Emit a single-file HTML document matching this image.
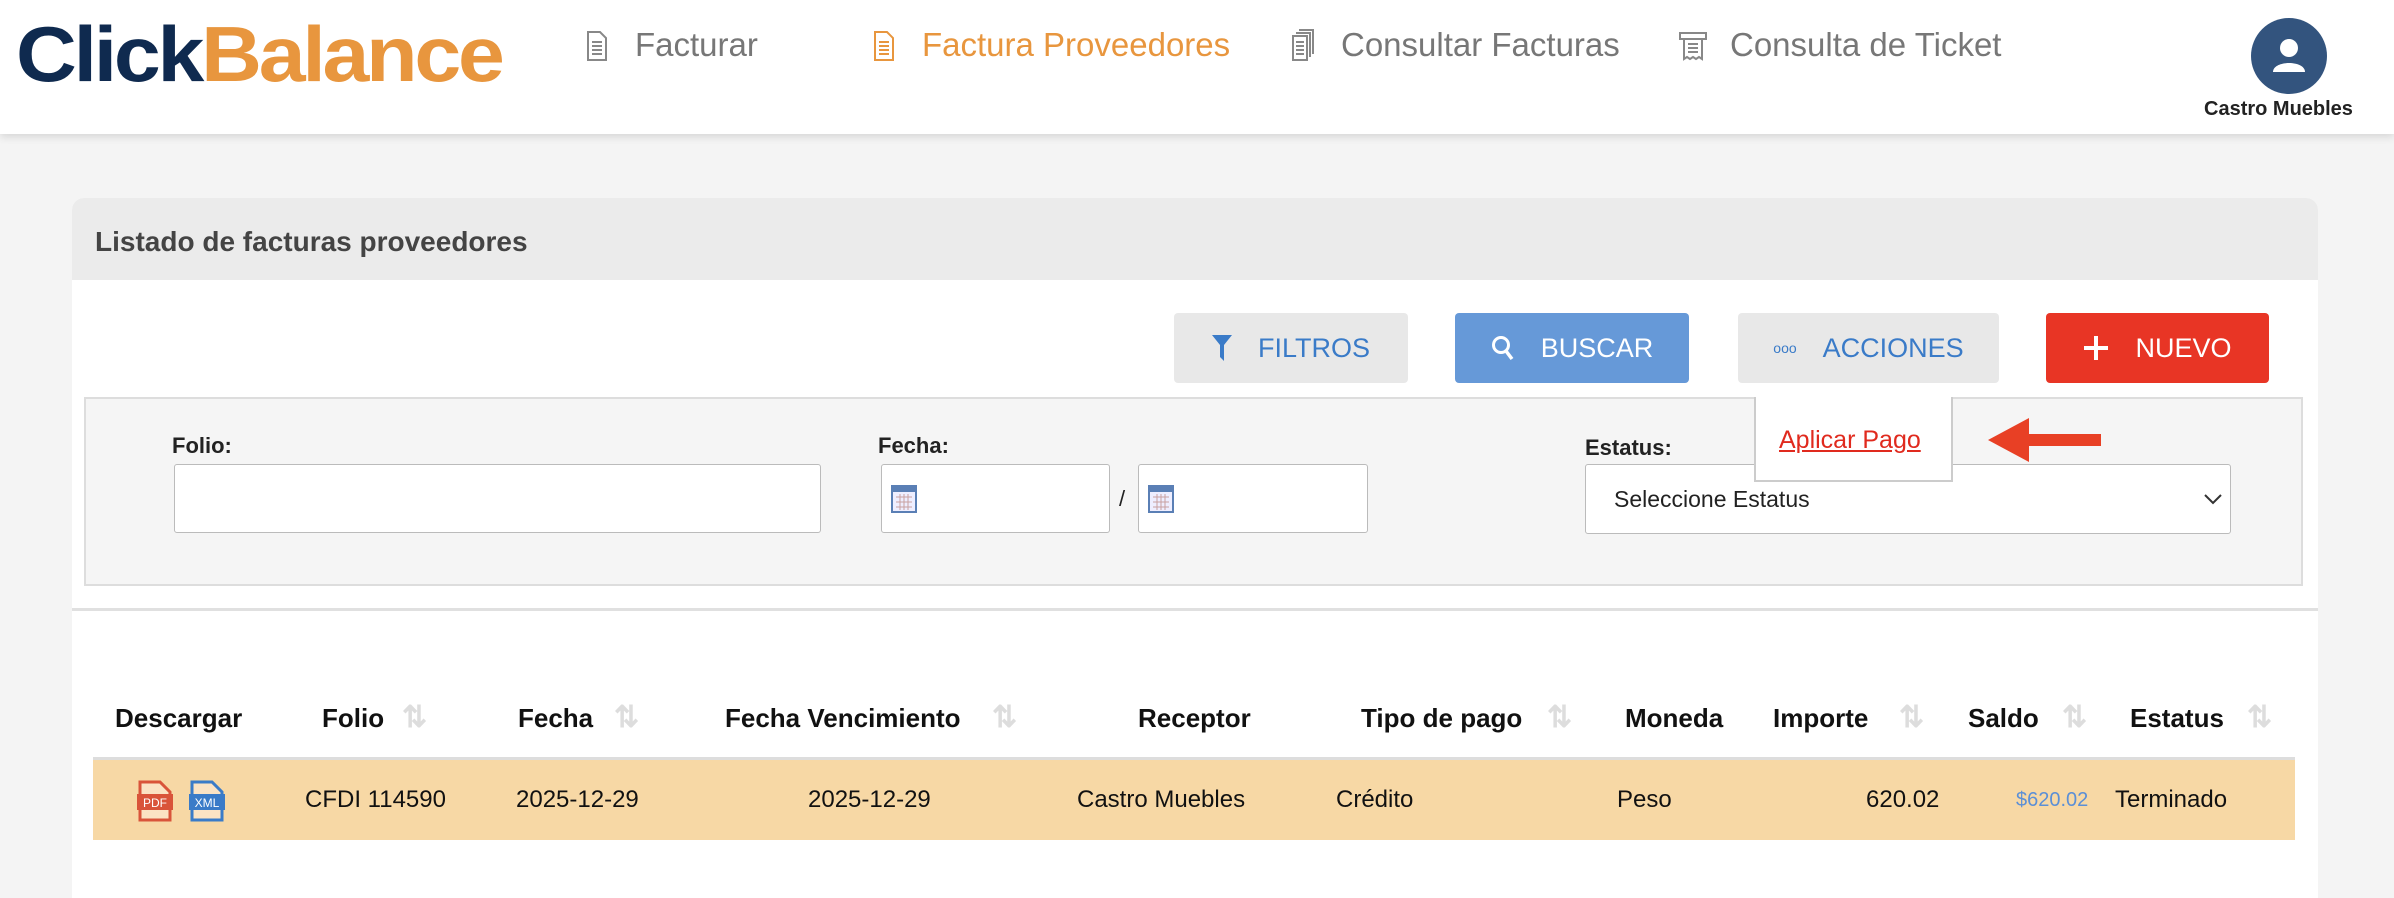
<!DOCTYPE html>
<html><head><meta charset="utf-8"><style>
*{margin:0;padding:0;box-sizing:border-box}
body{width:2394px;height:878px;background:#f4f4f4;font-family:"Liberation Sans",sans-serif;position:relative;overflow:hidden}
.a{position:absolute;white-space:nowrap}
.hdr{position:absolute;left:0;top:0;width:2394px;height:134px;background:#fff;box-shadow:0 3px 8px rgba(0,0,0,.12)}
.nav{font-size:33px;color:#777;top:26px}
.card{position:absolute;left:72px;top:198px;width:2246px;height:700px;background:#fff;border-radius:12px 12px 0 0;overflow:hidden}
.btn{position:absolute;top:313px;height:70px;border-radius:4px;font-size:27px;display:flex;align-items:center;justify-content:center;gap:26px}
.lbl{font-weight:bold;font-size:22px;color:#222}
.inp{position:absolute;height:69px;background:#fff;border:1px solid #bbb;border-radius:3px}
.th{font-weight:bold;font-size:26px;color:#111;top:703px}
.td{font-size:24px;color:#111;top:786px}
.sort{position:absolute;top:700px;font-size:30px;color:#ddd;font-weight:bold}
</style></head><body>
<div class="hdr"></div>
<div class="a" style="left:16px;top:14px;font-size:78px;font-weight:bold;letter-spacing:-3px;line-height:80px;transform:scaleX(1.08);transform-origin:left top"><span style="color:#0f2a4f">Click</span><span style="color:#e8963e">Balance</span></div>

<svg class="a" style="left:586px;top:30px" width="22" height="32" viewBox="0 0 22 32"><path d="M2 2h12l6 6v22H2z" fill="none" stroke="#888" stroke-width="2"/><path d="M6 12h10M6 16h10M6 20h10M6 24h10" stroke="#888" stroke-width="2"/></svg>
<div class="a nav" style="left:635px">Facturar</div>
<svg class="a" style="left:873px;top:30px" width="22" height="32" viewBox="0 0 22 32"><path d="M2 2h12l6 6v22H2z" fill="none" stroke="#e8963e" stroke-width="2"/><path d="M6 12h10M6 16h10M6 20h10M6 24h10" stroke="#e8963e" stroke-width="2"/></svg>
<div class="a nav" style="left:922px;color:#e8963e">Factura Proveedores</div>
<svg class="a" style="left:1291px;top:28px" width="26" height="34" viewBox="0 0 26 34"><path d="M8 2h14v24M5 5h14v24" fill="none" stroke="#888" stroke-width="2"/><path d="M2 8h14v24H2z" fill="none" stroke="#888" stroke-width="2"/><path d="M5 14h8M5 18h8M5 22h8M5 26h8" stroke="#888" stroke-width="2"/></svg>
<div class="a nav" style="left:1341px">Consultar Facturas</div>
<svg class="a" style="left:1678px;top:30px" width="30" height="32" viewBox="0 0 30 32"><path d="M2 3h26v6H2z" fill="none" stroke="#888" stroke-width="2"/><path d="M6 9v20l3-2 3 2 3-2 3 2 3-2 3 2V9" fill="none" stroke="#888" stroke-width="2"/><path d="M10 14h10M10 18h10M10 22h10" stroke="#888" stroke-width="2"/></svg>
<div class="a nav" style="left:1730px">Consulta de Ticket</div>

<svg class="a" style="left:2251px;top:18px" width="76" height="76" viewBox="0 0 76 76"><circle cx="38" cy="38" r="38" fill="#33547e"/><circle cx="38" cy="30" r="9" fill="#fff"/><path d="M22 54c0-12 32-12 32 0z" fill="#fff"/></svg>
<div class="a" style="left:2204px;top:98px;font-size:20px;font-weight:bold;color:#222">Castro Muebles</div>

<div class="card">
 <div style="position:absolute;left:0;top:0;width:100%;height:82px;background:#ebebeb"></div>
 <div class="a" style="left:23px;top:28px;font-size:28px;font-weight:bold;color:#444">Listado de facturas proveedores</div>
</div>

<div class="btn" style="left:1174px;width:234px;background:#e8e8e8;color:#3a7bc8"><svg width="20" height="26" viewBox="0 0 20 26"><path d="M0 0h20l-8 10v16l-4-4V10z" fill="#3a7bc8"/></svg>FILTROS</div>
<div class="btn" style="left:1455px;width:234px;background:#6699d8;color:#fff"><svg width="24" height="26" viewBox="0 0 24 26"><circle cx="10" cy="10" r="7.5" fill="none" stroke="#fff" stroke-width="3"/><path d="M15 16l6 8" stroke="#fff" stroke-width="3.5"/></svg>BUSCAR</div>
<div class="btn" style="left:1738px;width:261px;background:#e8e8e8;color:#3a7bc8"><span style="font-size:14px">ooo</span>ACCIONES</div>
<div class="btn" style="left:2046px;width:223px;background:#e83525;color:#fff"><svg width="26" height="26" viewBox="0 0 26 26"><path d="M13 1v24M1 13h24" stroke="#fff" stroke-width="4"/></svg>NUEVO</div>

<div class="a" style="left:84px;top:397px;width:2219px;height:189px;background:#f5f5f5;border:2px solid #ddd"></div>
<div class="a lbl" style="left:172px;top:433px">Folio:</div>
<div class="inp" style="left:174px;top:464px;width:647px"></div>
<div class="a lbl" style="left:878px;top:433px">Fecha:</div>
<div class="inp" style="left:881px;top:464px;width:229px"></div>
<div class="a" style="left:1119px;top:486px;font-size:22px;color:#222">/</div>
<div class="inp" style="left:1138px;top:464px;width:230px"></div>
<svg class="a" style="left:891px;top:485px" width="26" height="28" viewBox="0 0 26 28"><rect x="1" y="1" width="24" height="26" fill="#eef" stroke="#5a7fb5" stroke-width="2"/><rect x="1" y="1" width="24" height="6" fill="#5a7fb5"/><path d="M5 12h16M5 17h16M5 22h16M9 9v16M13 9v16M17 9v16" stroke="#c8a0a0" stroke-width="1"/></svg>
<svg class="a" style="left:1148px;top:485px" width="26" height="28" viewBox="0 0 26 28"><rect x="1" y="1" width="24" height="26" fill="#eef" stroke="#5a7fb5" stroke-width="2"/><rect x="1" y="1" width="24" height="6" fill="#5a7fb5"/><path d="M5 12h16M5 17h16M5 22h16M9 9v16M13 9v16M17 9v16" stroke="#c8a0a0" stroke-width="1"/></svg>
<div class="a lbl" style="left:1585px;top:435px">Estatus:</div>
<div class="inp" style="left:1585px;top:464px;width:646px;height:70px"></div>
<div class="a" style="left:1614px;top:486px;font-size:23px;color:#222">Seleccione Estatus</div>
<svg class="a" style="left:2203px;top:493px" width="20" height="12" viewBox="0 0 20 12"><path d="M2 2l8 8 8-8" fill="none" stroke="#333" stroke-width="2"/></svg>

<div class="a" style="left:1754px;top:397px;width:199px;height:85px;background:#fff;border:2px solid #ccc;border-top:none"></div>
<div class="a" style="left:1779px;top:426px;font-size:25px;color:#e02a1e;text-decoration:underline">Aplicar Pago</div>
<svg class="a" style="left:1985px;top:414px" width="120" height="52" viewBox="0 0 120 52"><path d="M3 26L44 4v16h72v12H44v16z" fill="#e84025"/></svg>

<div class="a" style="left:72px;top:608px;width:2246px;height:3px;background:#e0e0e0"></div>

<div class="a th" style="left:115px">Descargar</div>
<div class="a th" style="left:322px">Folio</div><div class="sort" style="left:402px">⇅</div>
<div class="a th" style="left:518px">Fecha</div><div class="sort" style="left:614px">⇅</div>
<div class="a th" style="left:725px">Fecha Vencimiento</div><div class="sort" style="left:992px">⇅</div>
<div class="a th" style="left:1138px">Receptor</div>
<div class="a th" style="left:1361px">Tipo de pago</div><div class="sort" style="left:1547px">⇅</div>
<div class="a th" style="left:1625px">Moneda</div>
<div class="a th" style="left:1773px">Importe</div><div class="sort" style="left:1899px">⇅</div>
<div class="a th" style="left:1968px">Saldo</div><div class="sort" style="left:2062px">⇅</div>
<div class="a th" style="left:2130px">Estatus</div><div class="sort" style="left:2247px">⇅</div>

<div class="a" style="left:93px;top:757px;width:2202px;height:83px;background:#f7d8a5;border-top:3px solid #ddd"></div>
<svg class="a" style="left:137px;top:780px" width="36" height="42" viewBox="0 0 36 42"><path d="M3 2h20l10 10v28H3z" fill="#fbe3c4" stroke="#d9543a" stroke-width="3"/><rect x="0" y="14" width="36" height="16" fill="#d9543a"/><text x="18" y="27" font-size="12" fill="#fff" text-anchor="middle" font-family="Liberation Sans">PDF</text></svg>
<svg class="a" style="left:189px;top:780px" width="36" height="42" viewBox="0 0 36 42"><path d="M3 2h20l10 10v28H3z" fill="#fbe3c4" stroke="#3a7bc8" stroke-width="3"/><rect x="0" y="14" width="36" height="16" fill="#3a7bc8"/><text x="18" y="27" font-size="12" fill="#fff" text-anchor="middle" font-family="Liberation Sans">XML</text></svg>
<div class="a td" style="left:305px">CFDI 114590</div>
<div class="a td" style="left:516px">2025-12-29</div>
<div class="a td" style="left:808px">2025-12-29</div>
<div class="a td" style="left:1077px">Castro Muebles</div>
<div class="a td" style="left:1336px">Crédito</div>
<div class="a td" style="left:1617px">Peso</div>
<div class="a td" style="left:1866px">620.02</div>
<div class="a td" style="left:2016px;font-size:20px;color:#5b8fd6;top:789px">$620.02</div>
<div class="a td" style="left:2115px">Terminado</div>
</body></html>
